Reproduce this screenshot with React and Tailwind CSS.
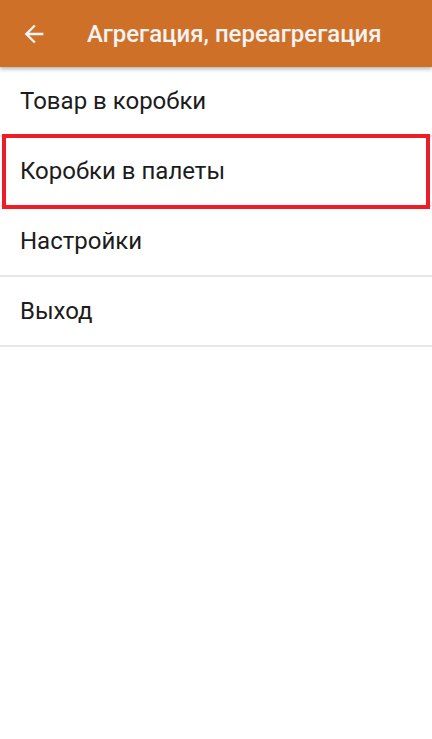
import React from 'react';

const items = ['Товар в коробки', 'Коробки в палеты', 'Настройки', 'Выход'];

const App = () => {
  return (
    <div className="min-h-[739px] w-[432px] bg-white" style={{ fontFamily: 'Roboto, "Noto Sans", sans-serif' }}>
      {/* Toolbar */}
      <header className="relative z-10 flex h-[67px] items-center bg-[#cf7028] shadow-[0_2px_4px_rgba(0,0,0,0.3)]">
        <div className="flex w-[87px] items-center pl-[20px]">
          <svg width="28" height="28" viewBox="0 0 24 24">
            <path d="M20 11H7.83l5.59-5.59L12 4l-8 8 8 8 1.41-1.41L7.83 13H20v-2z" fill="#f5f5f5" />
          </svg>
        </div>
        <h1 className="text-[24px] font-medium text-[#f3f3f3]">Агрегация, переагрегация</h1>
      </header>

      {/* Menu */}
      <ul>
        {items.map((label, i) => (
          <li key={label} className="relative flex h-[70px] items-center border-b-2 border-[#e6e6e6] pl-[20px]">
            <span className="text-[24px] text-[#1c1c1c]">{label}</span>
            {i === 1 && (
              <div className="pointer-events-none absolute left-[2px] right-[2px] top-[-3px] bottom-[-4px] border-4 border-[#ee1c25]" />
            )}
          </li>
        ))}
      </ul>
    </div>
  );
};

export default App;
